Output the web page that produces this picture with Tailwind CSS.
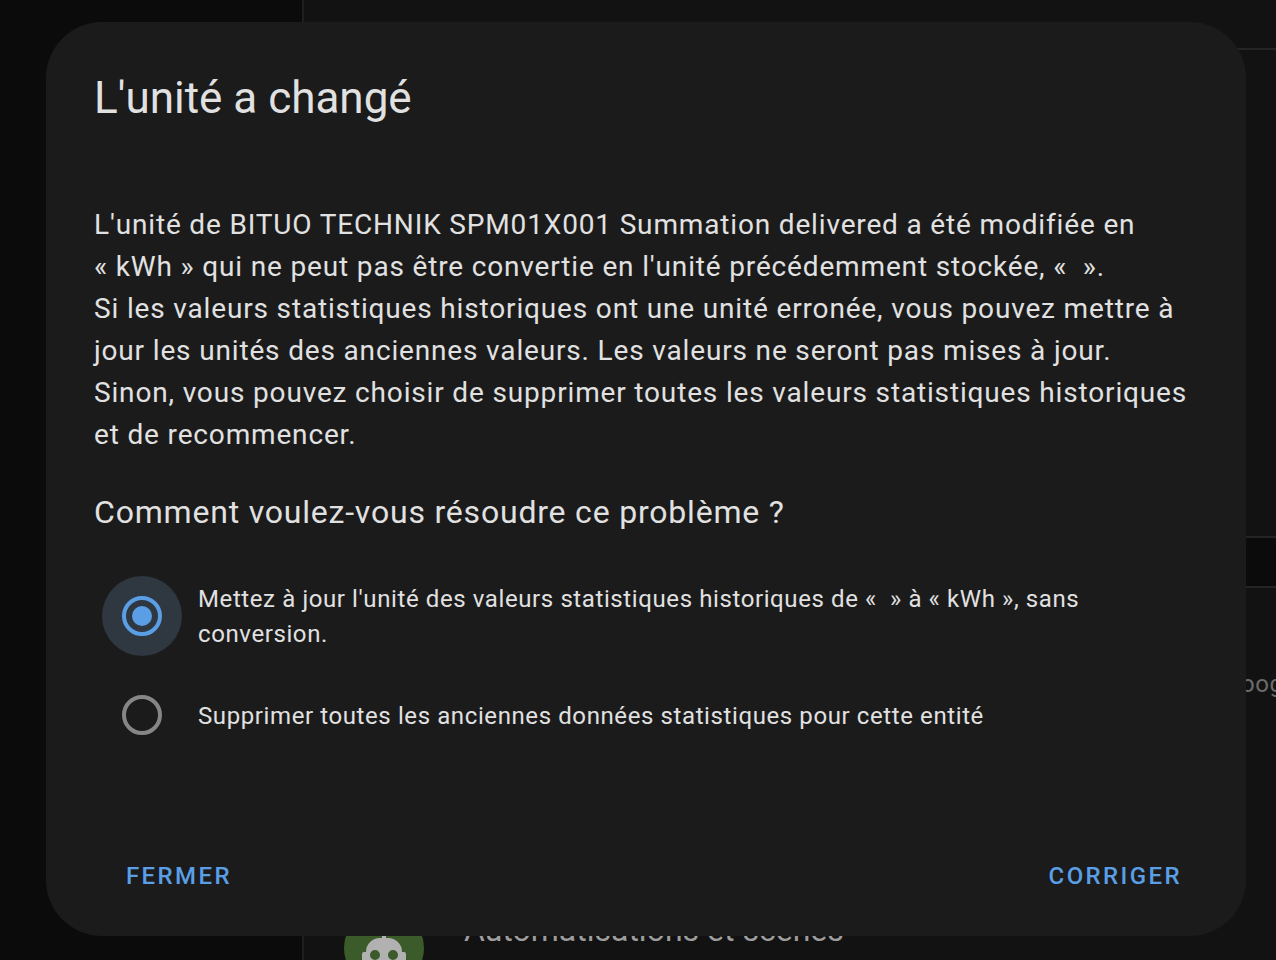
<!DOCTYPE html>
<html lang="fr">
<head>
    <meta charset="UTF-8">
    <meta name="viewport" content="width=device-width, initial-scale=1.0">
    <title>L'unité a changé</title>
    <script src="https://cdn.jsdelivr.net/npm/@tailwindcss/browser@4"></script>
</head>
<body class="bg-[#0b0b0b] font-[Roboto,sans-serif] text-[#e1e1e1]">
    <!-- Settings page behind the dialog -->
    <div class="flex h-screen overflow-hidden" aria-hidden="true">
        <aside class="w-[304px] shrink-0 border-r-2 border-[#1f1f1f]"></aside>
        <main class="min-w-0 flex-1">
            <div class="h-[50px] border-b-2 border-[#242424] bg-[#121212]"></div>
            <div class="h-[488px] border-b-2 border-[#242424] bg-[#121212]"></div>
            <ul class="mt-12 border-t-2 border-[#242424] bg-[#121212]">
                <li class="flex h-36 items-center justify-end overflow-hidden pt-12">
                    <span class="w-[52px] whitespace-nowrap text-2xl tracking-wide text-[#6b6b6b]">Google</span>
                </li>
                <li class="h-36"></li>
                <li class="flex h-36 items-center gap-10 pl-10">
                    <span class="flex size-20 shrink-0 items-center justify-center rounded-full bg-[#3c5b2a]">
                        <svg class="size-12" viewBox="0 0 24 24" fill="#b1b1b1">
                            <path d="M12,2A2,2 0 0,1 14,4C14,4.74 13.6,5.39 13,5.73V7H14A7,7 0 0,1 21,14H22A1,1 0 0,1 23,15V18A1,1 0 0,1 22,19H21V20A2,2 0 0,1 19,22H5A2,2 0 0,1 3,20V19H2A1,1 0 0,1 1,18V15A1,1 0 0,1 2,14H3A7,7 0 0,1 10,7H11V5.73C10.4,5.39 10,4.74 10,4A2,2 0 0,1 12,2M7.5,13A2.5,2.5 0 0,0 5,15.5A2.5,2.5 0 0,0 7.5,18A2.5,2.5 0 0,0 10,15.5A2.5,2.5 0 0,0 7.5,13M16.5,13A2.5,2.5 0 0,0 14,15.5A2.5,2.5 0 0,0 16.5,18A2.5,2.5 0 0,0 19,15.5A2.5,2.5 0 0,0 16.5,13Z"/>
                        </svg>
                    </span>
                    <span class="pb-9 text-[32px] leading-10 text-[#9e9e9e]">Automatisations et scènes</span>
                </li>
            </ul>
        </main>
    </div>

    <!-- Dialog -->
    <div class="fixed inset-0 flex items-start pt-[22px] pr-[30px] pl-[46px]">
        <form role="dialog" aria-labelledby="dialog-title" class="w-full rounded-[56px] bg-[#1b1b1b] px-12 pt-12 pb-6">
            <h1 id="dialog-title" class="text-[44px] leading-14">L'unité a changé</h1>

            <p class="mt-[78px] text-[28px] leading-[42px] tracking-[0.03em]">
                L'unité de BITUO TECHNIK SPM01X001 Summation delivered a été modifiée en<br>
                « kWh » qui ne peut pas être convertie en l'unité précédemment stockée, «&nbsp; ».<br>
                Si les valeurs statistiques historiques ont une unité erronée, vous pouvez mettre à<br>
                jour les unités des anciennes valeurs. Les valeurs ne seront pas mises à jour.<br>
                Sinon, vous pouvez choisir de supprimer toutes les valeurs statistiques historiques<br>
                et de recommencer.
            </p>

            <fieldset class="mt-9">
                <legend class="text-[32px] leading-10 tracking-wide">Comment voulez-vous résoudre ce problème ?</legend>

                <div class="mt-11 flex items-center gap-4 pl-2">
                    <span class="flex size-20 shrink-0 items-center justify-center rounded-full has-checked:bg-[#2f3740]">
                        <input id="fix-update" type="radio" name="fix" value="update" checked
                            class="flex size-10 appearance-none items-center justify-center rounded-full border-4 border-[#868686] outline-none checked:border-[#5a9fe6] checked:before:size-5 checked:before:rounded-full checked:before:bg-[#5a9fe6]">
                    </span>
                    <label for="fix-update" class="pt-0.5 text-2xl leading-[35px] tracking-wide">
                        Mettez à jour l'unité des valeurs statistiques historiques de «&nbsp; » à « kWh », sans<br>
                        conversion.
                    </label>
                </div>

                <div class="mt-[19px] flex items-center gap-4 pl-2">
                    <span class="flex size-20 shrink-0 items-center justify-center rounded-full has-checked:bg-[#2f3740]">
                        <input id="fix-clear" type="radio" name="fix" value="clear"
                            class="flex size-10 appearance-none items-center justify-center rounded-full border-4 border-[#868686] outline-none checked:border-[#5a9fe6] checked:before:size-5 checked:before:rounded-full checked:before:bg-[#5a9fe6]">
                    </span>
                    <label for="fix-clear" class="pt-0.5 text-2xl leading-[35px] tracking-wide">Supprimer toutes les anciennes données statistiques pour cette entité</label>
                </div>
            </fieldset>

            <!-- Actions -->
            <div class="mt-[85px] flex items-center justify-between">
                <button type="button" class="h-[72px] px-8 text-2xl font-medium tracking-widest text-[#5a9fe6] uppercase">Fermer</button>
                <button type="submit" class="-mr-4 h-[72px] px-8 text-2xl font-medium tracking-widest text-[#5a9fe6] uppercase">Corriger</button>
            </div>
        </form>
    </div>
</body>
</html>
